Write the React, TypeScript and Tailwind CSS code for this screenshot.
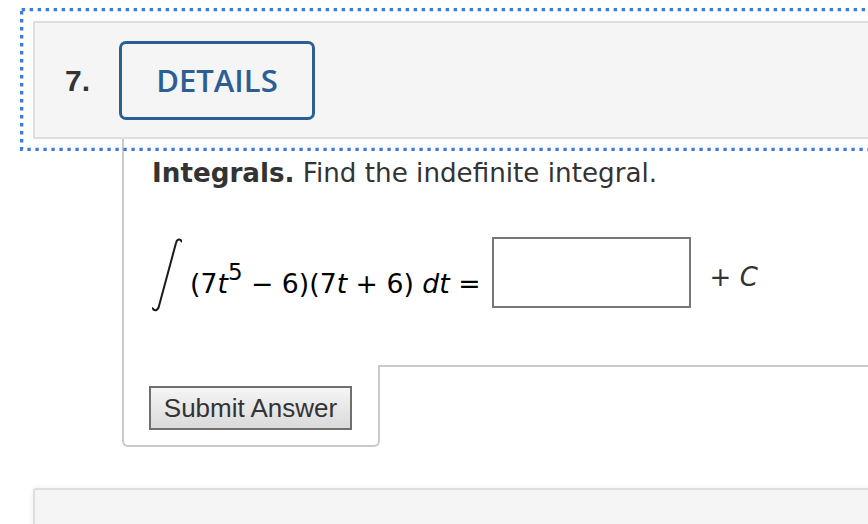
import { useState } from 'react';

function IntegralSign() {
  return (
    <svg width="30" height="74" viewBox="0 0 30 74" className="shrink-0">
      <path
        d="M29.5 3.5 C28.6 0.6 25 0.4 24 5 L7 68 C6 73 2 73.4 0.6 70.2"
        fill="none"
        stroke="#1a1a1a"
        strokeWidth="2"
        strokeLinecap="round"
      />
    </svg>
  );
}

// focus ring drawn as square dots, like the browser paints it
function FocusRing() {
  return (
    <svg
      width="926"
      height="143"
      className="pointer-events-none absolute left-[-13px] top-[-13px]"
    >
      <rect
        x="1.65"
        y="1.65"
        width="922.7"
        height="139.7"
        fill="none"
        stroke="#3b7ddd"
        strokeWidth="3.3"
        strokeDasharray="3.4 4.6"
      />
    </svg>
  );
}

export default function App() {
  const [answer, setAnswer] = useState('');

  return (
    <div className="min-h-screen overflow-hidden bg-white">
      <div className="pl-[33px] pt-[21px]">
        <div className="relative">
          <header className="flex h-[118px] w-[900px] items-center border-2 border-[#dedede] bg-[#f5f5f5]">
            <span className="ml-[30px] font-['Liberation_Sans',Arial,sans-serif] text-[30px] font-bold text-[#333]">7.</span>
            <button className="ml-[29px] flex h-[79px] w-[196px] items-center justify-center rounded-[7px] border-[3px] border-[#2b5f94] font-['Open_Sans',sans-serif] text-[31px] font-semibold text-[#2b5f94]">
              DETAILS
            </button>
          </header>
          <FocusRing />
        </div>

        <div className="ml-[89px]">
          <div className="h-[226px] border-l-2 border-[#cacaca] pl-[28px] pt-[20px] font-['DejaVu_Sans',Verdana,sans-serif] text-[#333]">
            <p className="h-[28px] text-[26.2px] leading-[28px]">
              <b>Integrals.</b> Find the indefinite integral.
            </p>

            <div className="mt-[50px] flex items-start">
              <div className="mt-px">
                <IntegralSign />
              </div>
              <div className="ml-[8px] mt-[32px] whitespace-pre text-[26.7px] leading-[30px] text-black">
                (7<i>t</i>
                <sup className="top-[-13px] text-[23px]">5</sup> − 6)(7<i>t</i> + 6) <i>dt</i> =
              </div>
              <input
                value={answer}
                onChange={(event) => setAnswer(event.target.value)}
                className="ml-[11px] h-[71px] w-[199px] border-2 border-[#777] bg-white px-2 text-[24px] text-black focus:outline-none"
              />
              <div className="ml-[19px] mt-[25px] whitespace-pre text-[26px] leading-[30px] text-[#333]">
                + <i>C</i>
              </div>
            </div>
          </div>

          <div className="flex">
            <div className="h-[82px] w-[258px] rounded-b-[6px] border-x-2 border-b-2 border-[#cacaca] pl-[25px] pt-[21px]">
              <button className="h-[44px] w-[203px] border-2 border-[#6f6f6f] bg-linear-to-b from-[#f5f5f5] to-[#dadada] font-['Liberation_Sans',Arial,sans-serif] text-[26px] text-[#333]">
                Submit Answer
              </button>
            </div>
            <div className="flex-1 border-t-2 border-[#cacaca]" />
          </div>
        </div>

        <div className="mt-[41px] h-[80px] w-[900px] rounded-[3px] border-2 border-[#dedede] bg-[#f5f5f5] shadow-[0_0_6px_rgba(0,0,0,0.08)]" />
      </div>
    </div>
  );
}
